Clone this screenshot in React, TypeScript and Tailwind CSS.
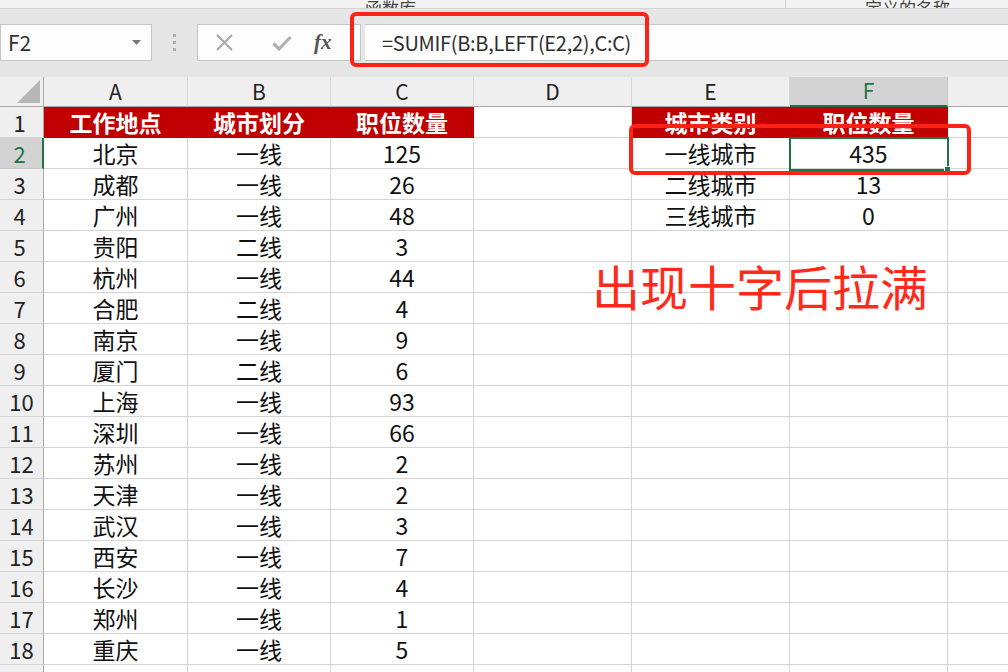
import React from 'react';

const font = "font-['Noto_Sans_CJK_SC','Noto_Sans',sans-serif]";

const rows: [string, string, string, string, string][] = [
    ['北京', '一线', '125', '一线城市', '435'],
    ['成都', '一线', '26', '二线城市', '13'],
    ['广州', '一线', '48', '三线城市', '0'],
    ['贵阳', '二线', '3', '', ''],
    ['杭州', '一线', '44', '', ''],
    ['合肥', '二线', '4', '', ''],
    ['南京', '一线', '9', '', ''],
    ['厦门', '二线', '6', '', ''],
    ['上海', '一线', '93', '', ''],
    ['深圳', '一线', '66', '', ''],
    ['苏州', '一线', '2', '', ''],
    ['天津', '一线', '2', '', ''],
    ['武汉', '一线', '3', '', ''],
    ['西安', '一线', '7', '', ''],
    ['长沙', '一线', '4', '', ''],
    ['郑州', '一线', '1', '', ''],
    ['重庆', '一线', '5', '', ''],
];

// row header, A..G
const gridCols = 'grid w-max grid-cols-[44px_144px_143px_143px_158px_158px_158px_158px]';

function Cell({ children, red }: { children?: React.ReactNode; red?: boolean }) {
    return (
        <div
            className={
                red
                    ? 'h-[31px] flex items-center justify-center bg-[#c00000] border-r border-b border-[#c00000] text-white font-bold text-[23px] leading-none'
                    : 'h-[31px] flex items-center justify-center border-r border-b border-[#d4d4d4] text-[#111] text-[23px] leading-none'
            }
        >
            {children}
        </div>
    );
}

export default function App() {
    const letters = ['A', 'B', 'C', 'D', 'E', 'F', 'G'];

    return (
        <div className={`relative w-[1008px] h-[672px] overflow-hidden bg-white ${font}`}>
            {/* ribbon remnant */}
            <div className="h-[9px] bg-[#f3f3f3] border-b border-[#d5d5d5] flex items-end overflow-hidden text-[#444] text-[17px] leading-[18px]">
                <span className="ml-[365px] -mb-[9px]">函数库</span>
                <div className="ml-[369px] w-px h-full bg-[#cfcfcf]" />
                <span className="ml-[79px] -mb-[9px]">定义的名称</span>
            </div>

            {/* formula bar */}
            <div className="h-[68px] bg-[#e6e6e6] pt-[15px] flex items-start">
                <div className="w-[152px] h-[37px] bg-[#fdfdfd] border border-[#c6c6c6] flex items-center pl-[7px] pr-[10px] text-[21px] text-[#333]">
                    <span className="flex-1">F2</span>
                    <svg width="9" height="5" viewBox="0 0 9 5">
                        <path d="M0 0 L9 0 L4.5 5 Z" fill="#777" />
                    </svg>
                </div>
                <div className="w-[45px] h-[37px] flex flex-col items-center justify-center gap-[4px]">
                    <div className="w-[3px] h-[3px] bg-[#b0b0b0]" />
                    <div className="w-[3px] h-[3px] bg-[#b0b0b0]" />
                    <div className="w-[3px] h-[3px] bg-[#b0b0b0]" />
                </div>
                <div className="w-[164px] h-[37px] bg-[#fdfdfd] border border-[#c6c6c6] flex items-center">
                    <svg className="ml-[17px]" width="19" height="19" viewBox="0 0 19 19">
                        <path d="M2 2 L17 17 M17 2 L2 17" stroke="#a8a8a8" strokeWidth="2" />
                    </svg>
                    <svg className="ml-[38px]" width="20" height="16" viewBox="0 0 20 16">
                        <path d="M1.5 8.5 L7 14 L18.5 2" stroke="#b2b2b2" strokeWidth="3.2" fill="none" />
                    </svg>
                    <span className="ml-[22px] text-[21px] italic text-[#555] font-['Liberation_Serif',serif] font-bold leading-none">
                        fx
                    </span>
                </div>
                <div className="ml-[4px] flex-1 h-[37px] bg-[#fdfdfd] border-y border-[#c6c6c6] flex items-center pl-[17px] text-[20px] text-[#2e2e2e] tracking-[-0.3px]">
                    =SUMIF(B:B,LEFT(E2,2),C:C)
                </div>
            </div>

            {/* column headers */}
            <div className={gridCols}>
                <div className="h-[30px] bg-[#efefef] border-r border-b border-[#ababab] flex items-end justify-end pr-[3px] pb-[3px]">
                    <svg width="23" height="23" viewBox="0 0 23 23">
                        <path d="M23 0 L23 23 L0 23 Z" fill="#b7b7b7" />
                    </svg>
                </div>
                {letters.map((l) =>
                    l === 'F' ? (
                        <div
                            key={l}
                            className="h-[30px] bg-[#d3d3d3] border-r border-[#c6c6c6] border-b-2 border-b-[#217346] flex items-center justify-center text-[21px] text-[#217346]"
                        >
                            {l}
                        </div>
                    ) : (
                        <div
                            key={l}
                            className="h-[30px] bg-[#efefef] border-r border-[#d8d8d8] border-b border-b-[#ababab] flex items-center justify-center text-[21px] text-[#222]"
                        >
                            {l}
                        </div>
                    )
                )}
            </div>

            {/* row 1 */}
            <div className={gridCols}>
                <div className="h-[31px] bg-[#efefef] border-r border-r-[#ababab] border-b border-b-[#d4d4d4] flex items-center justify-center pr-[4px] text-[22px] text-[#222]">
                    1
                </div>
                <Cell red>工作地点</Cell>
                <Cell red>城市划分</Cell>
                <Cell red>职位数量</Cell>
                <Cell />
                <Cell red>城市类别</Cell>
                <Cell red>职位数量</Cell>
                <Cell />
            </div>

            {rows.map((r, i) => (
                <div key={i} className={gridCols}>
                    {i === 0 ? (
                        <div className="h-[31px] bg-[#d3d3d3] border-r-2 border-r-[#217346] border-b border-b-[#c6c6c6] flex items-center justify-center pr-[3px] text-[22px] text-[#217346]">
                            2
                        </div>
                    ) : (
                        <div
                            className={
                                i < 8
                                    ? 'h-[31px] bg-[#efefef] border-r border-r-[#ababab] border-b border-b-[#d4d4d4] flex items-center justify-center pr-[4px] text-[22px] text-[#222]'
                                    : 'h-[31px] bg-[#efefef] border-r border-r-[#ababab] border-b border-b-[#d4d4d4] flex items-center justify-center text-[22px] text-[#222]'
                            }
                        >
                            {i + 2}
                        </div>
                    )}
                    <Cell>{r[0]}</Cell>
                    <Cell>{r[1]}</Cell>
                    <Cell>{r[2]}</Cell>
                    <Cell />
                    <Cell>{r[3]}</Cell>
                    <Cell>{r[4]}</Cell>
                    <Cell />
                </div>
            ))}

            <div className={gridCols}>
                <div className="h-[31px] bg-[#efefef] border-r border-r-[#ababab] flex items-center justify-center text-[22px] text-[#222]">
                    19
                </div>
                <Cell />
                <Cell />
                <Cell />
                <Cell />
                <Cell />
                <Cell />
                <Cell />
            </div>

            {/* selected cell F2 */}
            <div className="absolute left-[789px] top-[137px] w-[160px] h-[34px] border-2 border-[#217346]">
                <div className="absolute -right-[4px] -bottom-[4px] w-[7px] h-[7px] bg-[#217346] border border-white" />
            </div>

            {/* annotations */}
            <div className="absolute left-[350px] top-[12px] w-[299px] h-[55px] border-4 border-[#ff2218] rounded-[6px]" />
            <div className="absolute left-[629px] top-[124px] w-[342px] h-[51px] border-4 border-[#ff2218] rounded-[6px]" />
            <div className="absolute left-[592px] top-[261px] text-[48px] leading-none text-[#ff2a1a] whitespace-nowrap">
                出现十字后拉满
            </div>
        </div>
    );
}
